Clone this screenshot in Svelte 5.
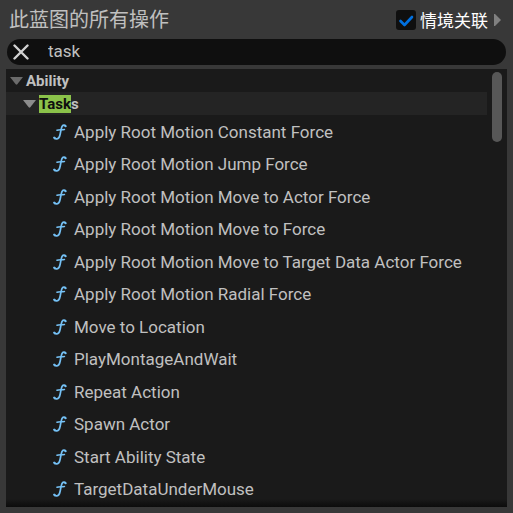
<script>
  let contextSensitive = $state(true);
  let query = $state('task');
  const actions = [
    'Apply Root Motion Constant Force',
    'Apply Root Motion Jump Force',
    'Apply Root Motion Move to Actor Force',
    'Apply Root Motion Move to Force',
    'Apply Root Motion Move to Target Data Actor Force',
    'Apply Root Motion Radial Force',
    'Move to Location',
    'PlayMontageAndWait',
    'Repeat Action',
    'Spawn Actor',
    'Start Ability State',
    'TargetDataUnderMouse'
  ];
</script>

<main class="menu">
  <header>
    <h1>此蓝图的所有操作</h1>
    <label class="context">
      <input type="checkbox" bind:checked={contextSensitive} />
      <svg class="tick" viewBox="0 0 20 20" aria-hidden="true">
        {#if contextSensitive}<path d="M4.5 11 L8.5 15 L16 7" />{/if}
      </svg>
      <span>情境关联</span>
    </label>
    <button class="more" aria-label="展开">
      <svg width="7" height="12" viewBox="0 0 7 12"><path d="M0 0 L1 0 L7 6 L1 12 L0 12 Z" fill="#808080" /></svg>
    </button>
  </header>

  <div class="search">
    <button aria-label="清除" onclick={() => (query = '')}>
      <svg width="16" height="16" viewBox="0 0 16 16"><path d="M1.5 1.5 L14.5 14.5 M14.5 1.5 L1.5 14.5" stroke="#d2d2d2" stroke-width="2.4" stroke-linecap="round" /></svg>
    </button>
    <input type="text" aria-label="搜索" bind:value={query} />
  </div>

  <section class="panel">
    <div class="tree">
      <button class="group">
        <svg width="13" height="8" viewBox="0 0 13 8"><path d="M0 0 H13 L7.3 7.3 Q6.5 8 5.7 7.3 Z" fill="#6b6b6b" /></svg>
        <span>Ability</span>
      </button>
      <button class="group nested">
        <svg width="13" height="8" viewBox="0 0 13 8"><path d="M0 0 H13 L7.3 7.3 Q6.5 8 5.7 7.3 Z" fill="#8c8c8c" /></svg>
        <span><mark>Task</mark>s</span>
      </button>
      <ul>
        {#each actions as action}
          <li>
            <svg width="14" height="16" viewBox="0 0 14 16" aria-hidden="true">
              <path d="M12.7 2.3 C12.4 1 10.2 .7 9.2 2.2 C8.3 3.5 7.8 7 7.2 10 C6.6 13.4 5.2 15 3.2 14.9 C1.9 14.9 1.1 14.4 1 13.6" stroke-width="1.7" />
              <path d="M4 6.2 C6 5.5 8.5 5.9 11.5 5.4" stroke-width="1.5" />
              <circle cx="12.2" cy="2.1" r=".6" /><circle cx="1.5" cy="13.8" r=".6" />
            </svg>
            <span>{action}</span>
          </li>
        {/each}
      </ul>
    </div>
    <div class="rail"><div class="thumb"></div></div>
  </section>
</main>

<style>
  :global(body) {
    margin: 0;
    background: #383838;
  }
  .menu {
    box-sizing: border-box;
    min-height: 100vh;
    padding: 0 6px 6px;
    display: flex;
    flex-direction: column;
    background: #383838;
    color: #c0c0c0;
    font-family: Roboto, "Noto Sans CJK SC", sans-serif;
    font-size: 17px;
  }
  button {
    margin: 0;
    padding: 0;
    border: 0;
    background: none;
    color: inherit;
    font: inherit;
  }
  svg {
    display: block;
    flex: none;
    fill: none;
  }
  header {
    display: flex;
    align-items: center;
    height: 39px;
    padding: 0 6px 0 3px;
  }
  h1 {
    flex: 1;
    margin: 0;
    font-size: 20px;
    font-weight: 400;
    line-height: 38px;
  }
  .context {
    position: relative;
    display: flex;
    align-items: center;
    gap: 4px;
    color: #fff;
  }
  .context input {
    appearance: none;
    width: 20px;
    height: 20px;
    margin: 0;
    border-radius: 3px;
    background: #0f0f0f;
  }
  .tick {
    position: absolute;
    left: 0;
    width: 20px;
    height: 20px;
    pointer-events: none;
    stroke: #0070e0;
    stroke-width: 2.6;
    stroke-linecap: round;
    stroke-linejoin: round;
  }
  .more {
    margin-left: 6px;
  }
  .search {
    display: flex;
    align-items: center;
    gap: 19px;
    height: 26px;
    margin: 0 1px 4px;
    padding: 0 6px;
    border-radius: 13px;
    background: #0f0f0f;
  }
  .search input {
    flex: 1;
    min-width: 0;
    height: 24px;
    padding: 0 0 2px;
    box-sizing: border-box;
    border: 0;
    outline: 0;
    background: none;
    color: #c0c0c0;
    font: inherit;
  }
  .panel {
    flex: 1;
    display: flex;
    background: linear-gradient(#1a1a1a calc(100% - 8px), #0c0c0c);
  }
  .tree {
    flex: 1;
    min-width: 0;
  }
  .group {
    display: flex;
    align-items: center;
    gap: 3px;
    width: 100%;
    height: 23px;
    padding-left: 4px;
    font-size: 15px;
    font-weight: 700;
  }
  .nested {
    padding-left: 17px;
    background: #242424;
  }
  mark {
    display: inline-block;
    line-height: 18px;
    background: #8bc24a;
    color: #0f0f0f;
  }
  ul {
    margin: 0;
    padding: 0;
    list-style: none;
  }
  li {
    display: flex;
    align-items: center;
    gap: 7px;
    height: 33px;
    padding-left: 47px;
    white-space: nowrap;
  }
  li:nth-child(even) {
    height: 32px;
  }
  li svg {
    stroke: #75c1f5;
    stroke-linecap: round;
  }
  .rail {
    width: 10px;
    padding: 3px 5px;
  }
  .thumb {
    height: 70px;
    border-radius: 5px;
    background: #575757;
  }
</style>
